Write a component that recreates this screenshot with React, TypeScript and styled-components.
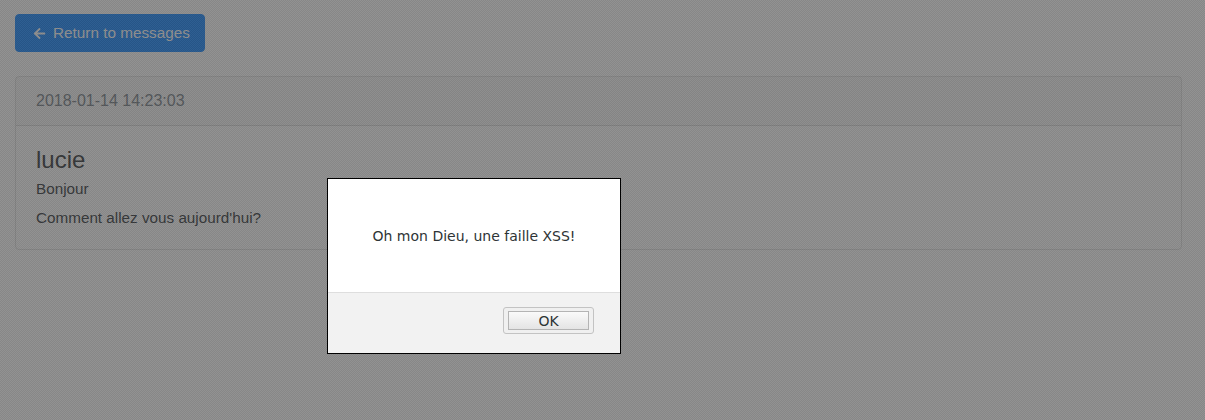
import { createGlobalStyle } from "styled-components";
import styled from "styled-components";
import { FaArrowLeft } from "react-icons/fa";

const GlobalStyle = createGlobalStyle`
  * {
    box-sizing: border-box;
  }
  body {
    margin: 0;
    font-family: "Liberation Sans", Arial, sans-serif;
    color: #212529;
    background: #fff;
  }
`;

const App = () => {
  return (
    <>
      <GlobalStyle />
      <Page>
        <BackButton>
          <FaArrowLeft size={13} />
          Return to messages
        </BackButton>
        <Card>
          <CardHeader>2018-01-14 14:23:03</CardHeader>
          <CardBody>
            <Author>lucie</Author>
            <CardText>Bonjour</CardText>
            <CardText>Comment allez vous aujourd'hui?</CardText>
          </CardBody>
        </Card>
      </Page>
      <Overlay />
      <AlertBox role="alertdialog">
        <AlertBody>Oh mon Dieu, une faille XSS!</AlertBody>
        <AlertFooter>
          <OkButton>
            <OkFace>OK</OkFace>
          </OkButton>
        </AlertFooter>
      </AlertBox>
    </>
  );
};

export default App;

const Page = styled.div`
  min-height: 100vh;
  padding: 14px 23px 0 15px;
`;

const BackButton = styled.button`
  display: inline-flex;
  align-items: center;
  gap: 7px;
  height: 38px;
  padding: 0 14px 0 17px;
  border: 1px solid #007bff;
  border-radius: 4px;
  background: #007bff;
  color: #fff;
  font-family: inherit;
  font-size: 15.3px;
  cursor: pointer;
`;

const Card = styled.div`
  margin-top: 24px;
  border: 1px solid rgba(0, 0, 0, 0.125);
  border-radius: 4px;
`;

const CardHeader = styled.div`
  padding: 12px 20px;
  line-height: 24px;
  font-size: 16px;
  color: #6c757d;
  background: rgba(0, 0, 0, 0.03);
  border-bottom: 1px solid rgba(0, 0, 0, 0.125);
`;

const CardBody = styled.div`
  padding: 20px;
`;

const Author = styled.h4`
  margin: 0 0 3px;
  font-size: 24px;
  font-weight: 400;
  line-height: 28.8px;
`;

const CardText = styled.p`
  margin: 0 0 7px;
  font-size: 15.25px;
  line-height: 22px;
  &:last-child {
    margin-bottom: 0;
  }
`;

const Overlay = styled.div`
  position: fixed;
  inset: 0;
  background-color: rgba(66, 66, 66, 0.6);
  background-image: repeating-conic-gradient(rgba(0, 0, 0, 0.05) 0 25%, rgba(255, 255, 255, 0.03) 0 50%);
  background-size: 2px 2px;
`;

const AlertBox = styled.div`
  position: fixed;
  left: 327px;
  top: 178px;
  width: 294px;
  height: 176px;
  display: flex;
  flex-direction: column;
  border: 1px solid #000;
  background: #fff;
  font-family: "DejaVu Sans", sans-serif;
  color: #2e3436;
`;

const AlertBody = styled.div`
  height: 113px;
  display: flex;
  align-items: center;
  justify-content: center;
  font-size: 14px;
`;

const AlertFooter = styled.div`
  flex: 1;
  display: flex;
  justify-content: flex-end;
  align-items: flex-start;
  padding: 14px 26px 0 0;
  background: #f2f2f2;
  border-top: 1px solid #dedede;
`;

const OkButton = styled.button`
  width: 91px;
  height: 27px;
  padding: 3px 4px;
  border: 1px solid #c3c3c3;
  border-radius: 3px;
  background: #f0f0f0;
  font-family: inherit;
  cursor: pointer;
`;

const OkFace = styled.span`
  display: flex;
  align-items: center;
  justify-content: center;
  height: 100%;
  border: 1px solid #b4b4b4;
  background: linear-gradient(#fafafa, #e4e4e4);
  font-size: 14px;
  color: #2e3436;
`;
